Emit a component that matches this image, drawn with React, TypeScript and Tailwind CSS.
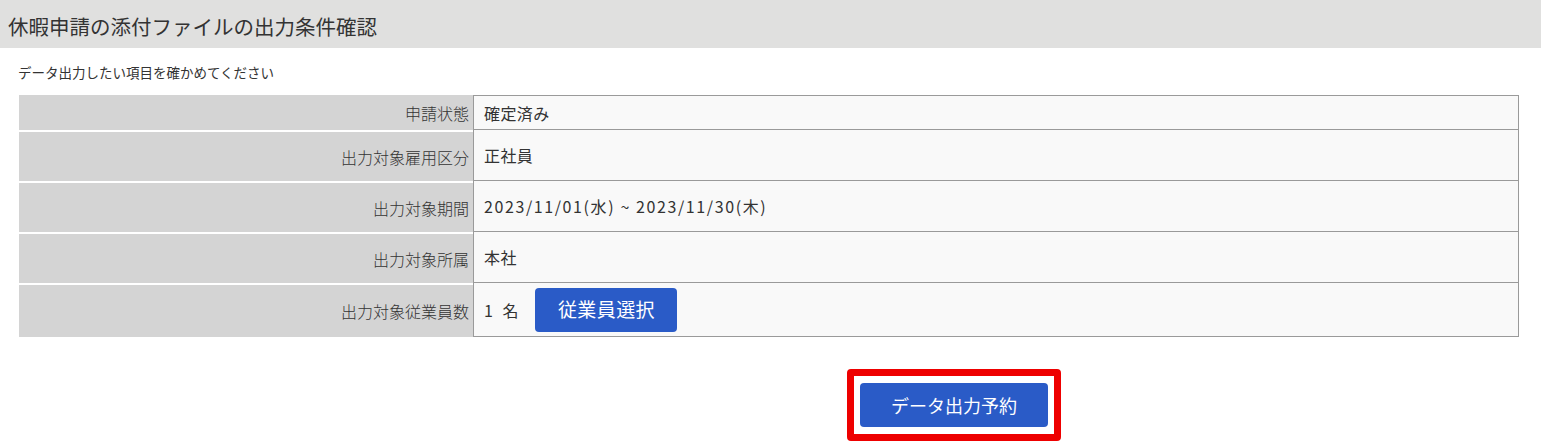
const FONT = { fontFamily: '"Noto Sans CJK JP", "Noto Sans", sans-serif' };

type Row = { label: string; value: React.ReactNode; h: string };

export default function App() {
  const rows: Row[] = [
    { label: '申請状態', value: '確定済み', h: 'h-[35px]' },
    { label: '出力対象雇用区分', value: '正社員', h: 'h-[51px]' },
    {
      label: '出力対象期間',
      value: <span className="tracking-[1.6px]">2023/11/01(水) ~ 2023/11/30(木)</span>,
      h: 'h-[51px]',
    },
    { label: '出力対象所属', value: '本社', h: 'h-[51px]' },
    {
      label: '出力対象従業員数',
      h: 'h-[54px]',
      value: (
        <div className="flex items-center gap-[14px]">
          <span className="tracking-[3px]">1 名</span>
          <button className="h-[44px] w-[142px] rounded-[4px] bg-[#2a5bc7] text-[19px] text-white">従業員選択</button>
        </div>
      ),
    },
  ];

  return (
    <div className="min-h-[443px] w-[1541px] bg-white text-[#333]" style={FONT}>
      <div className="flex h-[48px] items-center bg-[#e0e0df] pl-[8px] pt-[5px] text-[20.5px] text-[#333]">
        休暇申請の添付ファイルの出力条件確認
      </div>
      <div className="pl-[18px] pt-[14px] text-[13.5px] leading-[20px]">データ出力したい項目を確かめてください</div>
      <div className="ml-[19px] mt-[13px] w-[1500px]">
        {rows.map((r, i) => (
          <div key={r.label} className={`flex ${r.h}`}>
            <div
              className={`flex w-[454px] items-center justify-end bg-[#d4d4d4] pr-[4px] text-[16px] font-light text-[#333] ${
                i > 0 ? 'border-t-2 border-white' : ''
              }`}
            >
              {r.label}
            </div>
            <div
              className={`flex flex-1 items-center border-x border-b border-[#9a9a9a] bg-[#f9f9f9] pl-[10px] text-[16px] tracking-[0.4px] ${
                i === 0 ? 'border-t' : ''
              }`}
            >
              {r.value}
            </div>
          </div>
        ))}
      </div>
      <div className="mt-[32px] pl-[847px]">
        <div className="inline-flex rounded-[4px] border-[7px] border-[#ee0000] bg-white px-[6px] py-[7px]">
          <button className="h-[44px] w-[188px] rounded-[4px] bg-[#2a5bc7] text-[18px] text-white">データ出力予約</button>
        </div>
      </div>
    </div>
  );
}
